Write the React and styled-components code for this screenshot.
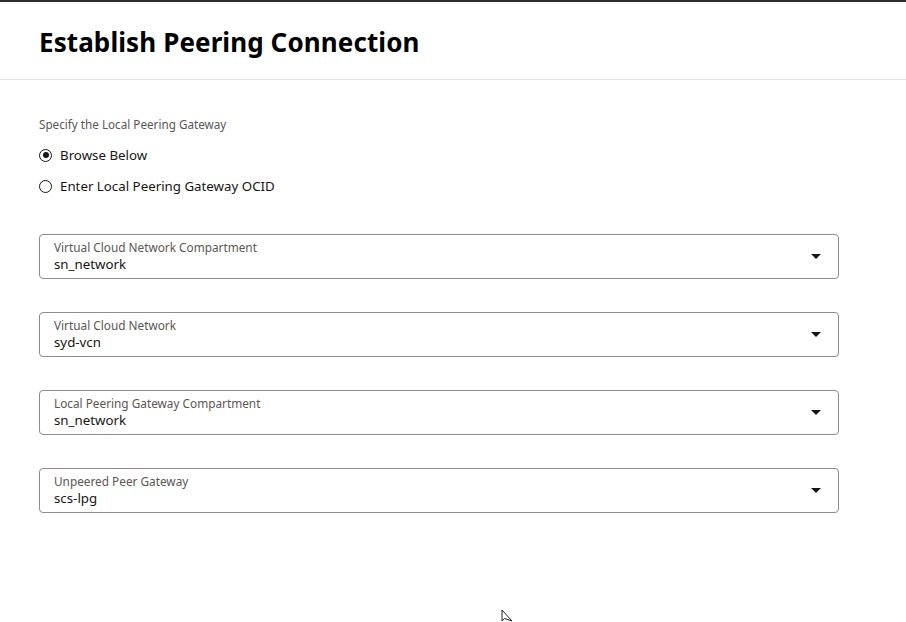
import React, { useState } from "react";
import styled, { createGlobalStyle } from "styled-components";

const GlobalStyle = createGlobalStyle`
  html, body {
    margin: 0;
    padding: 0;
    background: #ffffff;
    font-family: "Noto Sans", "Open Sans", sans-serif;
    color: #161513;
  }
`;

const fields = [
  { label: "Virtual Cloud Network Compartment", value: "sn_network" },
  { label: "Virtual Cloud Network", value: "syd-vcn" },
  { label: "Local Peering Gateway Compartment", value: "sn_network" },
  { label: "Unpeered Peer Gateway", value: "scs-lpg" },
];

function App() {
  const [mode, setMode] = useState("browse");

  return (
    <Page>
      <GlobalStyle />
      <TopBar />
      <Header>
        <Title>Establish Peering Connection</Title>
      </Header>
      <Body>
        <GroupLabel>Specify the Local Peering Gateway</GroupLabel>
        <RadioList>
          <RadioRow onClick={() => setMode("browse")}>
            <RadioDot checked={mode === "browse"} />
            Browse Below
          </RadioRow>
          <RadioRow onClick={() => setMode("ocid")}>
            <RadioDot checked={mode === "ocid"} />
            Enter Local Peering Gateway OCID
          </RadioRow>
        </RadioList>
        <Fields>
          {fields.map((f) => (
            <Select key={f.label}>
              <SelectText>
                <SelectLabel>{f.label}</SelectLabel>
                <SelectValue>{f.value}</SelectValue>
              </SelectText>
              <Caret />
            </Select>
          ))}
        </Fields>
      </Body>
      <Cursor width="12" height="14" viewBox="0 0 12 14">
        <path d="M1 1 L1 12 L3.5 9.5 L11 12 Z" fill="#ffffff" stroke="#222" strokeWidth="1" />
      </Cursor>
    </Page>
  );
}

export default App;

const Page = styled.div`
  position: relative;
  width: 906px;
  height: 622px;
  overflow: hidden;
  background: #ffffff;
`;

const TopBar = styled.div`
  height: 2px;
  background: #312d2a;
`;

const Header = styled.header`
  height: 78px;
  box-sizing: border-box;
  padding: 22px 39px 0;
  border-bottom: 1px solid #e4e2e0;
`;

const Title = styled.h1`
  margin: 0;
  font-size: 26px;
  font-weight: 700;
  letter-spacing: 0.1px;
  color: #000000;
  line-height: 36px;
`;

const Body = styled.div`
  padding: 36px 39px 0;
`;

const GroupLabel = styled.div`
  font-size: 11.7px;
  color: #5a5755;
  line-height: 16px;
`;

const RadioList = styled.div`
  display: flex;
  flex-direction: column;
  gap: 11px;
  margin-top: 13px;
`;

const RadioRow = styled.label`
  display: flex;
  align-items: center;
  gap: 8px;
  font-size: 13.3px;
  line-height: 20px;
  color: #161513;
  cursor: pointer;
`;

const RadioDot = styled.span`
  width: 13px;
  height: 13px;
  box-sizing: border-box;
  border-radius: 50%;
  border: 1.5px solid #161513;
  display: inline-flex;
  align-items: center;
  justify-content: center;
  &::after {
    content: "";
    width: 6px;
    height: 6px;
    border-radius: 50%;
    background: #161513;
    display: ${(p) => (p.checked ? "block" : "none")};
  }
`;

const Fields = styled.div`
  display: flex;
  flex-direction: column;
  gap: 33px;
  margin-top: 38px;
  width: 800px;
`;

const Select = styled.div`
  height: 45px;
  box-sizing: border-box;
  border: 1px solid #8f8c89;
  border-radius: 4px;
  display: flex;
  align-items: center;
  padding: 0 17px 0 14px;
`;

const SelectText = styled.div`
  flex: 1;
  display: flex;
  flex-direction: column;
`;

const SelectLabel = styled.span`
  font-size: 11.8px;
  line-height: 15px;
  color: #5a5755;
`;

const SelectValue = styled.span`
  font-size: 13.3px;
  line-height: 18px;
  color: #161513;
`;

const Caret = styled.span`
  width: 0;
  height: 0;
  border-left: 5px solid transparent;
  border-right: 5px solid transparent;
  border-top: 5px solid #161513;
`;

const Cursor = styled.svg`
  position: absolute;
  left: 501px;
  top: 609px;
`;
